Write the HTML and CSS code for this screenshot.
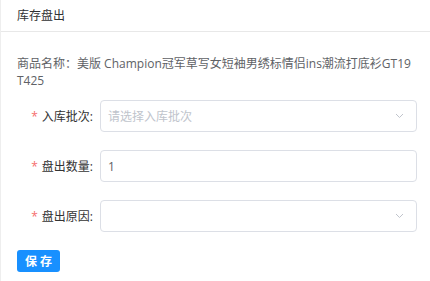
FILE: index.html
```html
<!DOCTYPE html>
<html lang="zh-CN">

<head>
    <meta charset="UTF-8">
    <meta name="viewport" content="width=device-width, initial-scale=1.0">
    <title>库存盘出</title>
    <link rel="stylesheet" href="styles.css">
</head>

<body>
    <div class="dialog">
        <div class="dialog-header">库存盘出</div>
        <div class="dialog-body">
            <p class="goods-name">商品名称：美版 Champion冠军草写女短袖男绣标情侣ins潮流打底衫GT19<wbr>T425</p>

            <div class="form-row">
                <label class="form-label"><i class="required">*</i>入库批次:</label>
                <div class="form-input select">
                    <span class="placeholder">请选择入库批次</span>
                    <svg class="arrow" width="9" height="6" viewBox="0 0 9 6">
                        <polyline points="1,1 4.5,4.5 8,1" fill="none" stroke="#c0c4cc" stroke-width="1"/>
                    </svg>
                </div>
            </div>

            <div class="form-row">
                <label class="form-label"><i class="required">*</i>盘出数量:</label>
                <div class="form-input">
                    <span class="value">1</span>
                </div>
            </div>

            <div class="form-row">
                <label class="form-label"><i class="required">*</i>盘出原因:</label>
                <div class="form-input select">
                    <span class="placeholder"></span>
                    <svg class="arrow" width="9" height="6" viewBox="0 0 9 6">
                        <polyline points="1,1 4.5,4.5 8,1" fill="none" stroke="#c0c4cc" stroke-width="1"/>
                    </svg>
                </div>
            </div>

            <button class="save">保 存</button>
        </div>
    </div>
</body>

</html>
```

FILE: styles.css
```css
* {
    box-sizing: border-box;
    font-family: "Open Sans", "Noto Sans CJK SC", sans-serif;
}

body {
    margin: 0;
    background-color: #ffffff;
    border-left: 1px solid #eeeeee;
    height: 281px;
}

.dialog {
    display: flex;
    flex-direction: column;
}

.dialog-header {
    height: 32px;
    line-height: 31px;
    padding: 0 16px;
    font-size: 12px;
    color: #303133;
    border-bottom: 1px solid #e8e8e8;
}

.dialog-body {
    display: flex;
    flex-direction: column;
    padding: 23px 13px 0 16px;
}

.goods-name {
    margin: 0 0 11px 0;
    font-size: 12px;
    line-height: 17px;
    color: #606266;
    width: 400px;
}

.form-row {
    display: flex;
    align-items: center;
    height: 32px;
    margin-bottom: 18px;
}

.form-label {
    width: 83px;
    padding-right: 7px;
    text-align: right;
    font-size: 12px;
    color: #333333;
}

.required {
    font-style: normal;
    color: #f56c6c;
    margin-right: 4px;
}

.form-input {
    flex: 1;
    height: 32px;
    border: 1px solid #dcdfe6;
    border-radius: 4px;
    display: flex;
    align-items: center;
    justify-content: space-between;
    padding: 0 12px 0 7px;
    font-size: 12px;
}

.placeholder {
    color: #c0c4cc;
}

.value {
    color: #606266;
}

.arrow {
    display: block;
}

.save {
    align-self: flex-start;
    width: 43px;
    height: 22px;
    border: none;
    border-radius: 3px;
    background-color: #1890ff;
    color: #ffffff;
    font-size: 12px;
    font-weight: bold;
    padding: 0;
    cursor: pointer;
}
```
